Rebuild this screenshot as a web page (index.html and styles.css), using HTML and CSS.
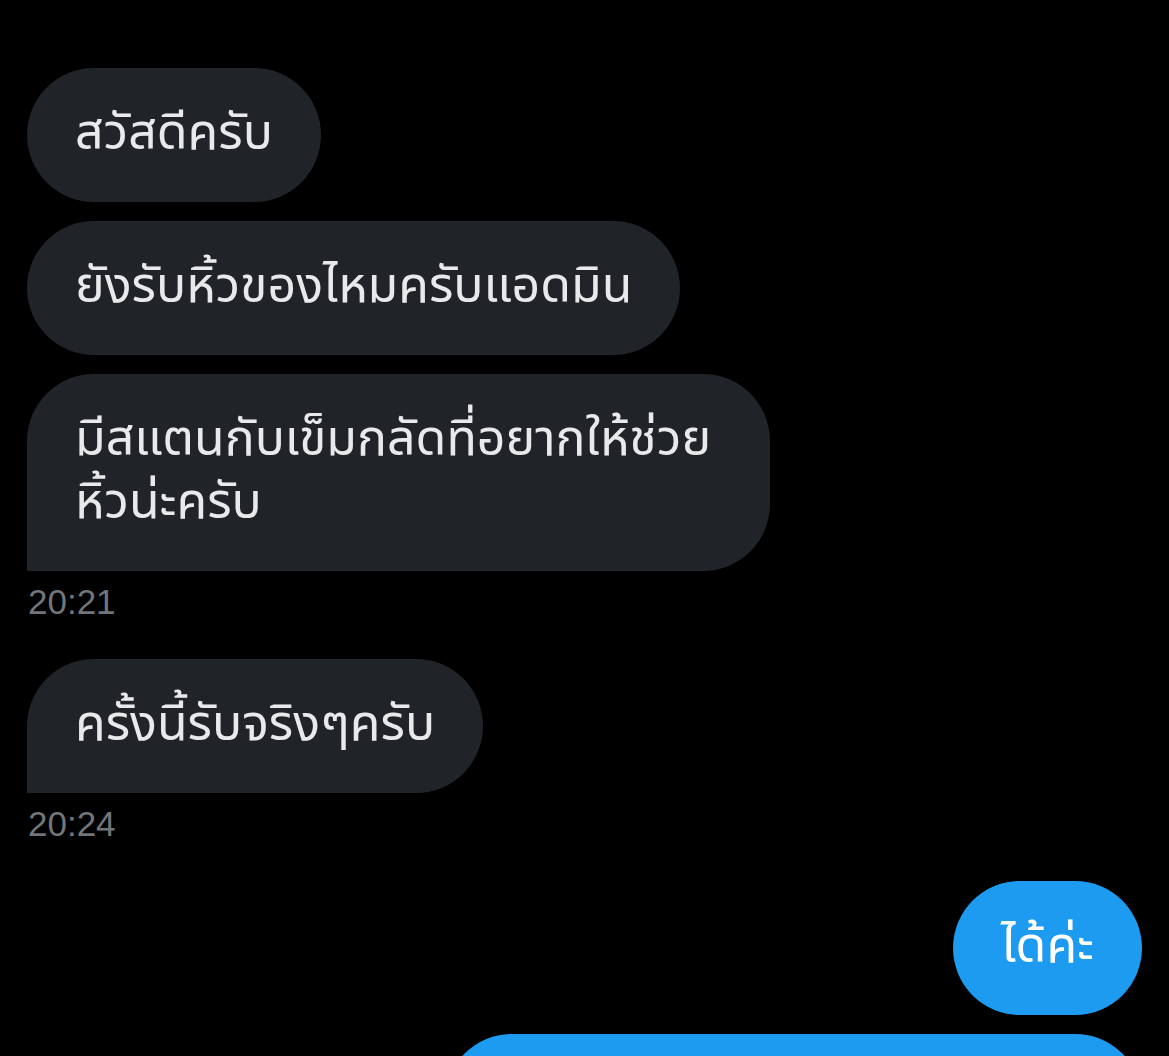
FILE: index.html
```html
<!DOCTYPE html>
<html>
<head>
  <meta charset="UTF-8">
  <link rel="stylesheet" href="styles.css">
</head>
<body>
  <div class="conversation">

    <!-- incoming group -->
    <div class="msg-group incoming">
      <div class="bubble first">สวัสดีครับ</div>
      <div class="bubble">ยังรับหิ้วของไหมครับแอดมิน</div>
      <div class="bubble last">มีสแตนกับเข็มกลัดที่อยากให้ช่วยหิ้วน่ะครับ</div>
      <div class="msg-time">20:21</div>
    </div>

    <div class="msg-group incoming">
      <div class="bubble single">ครั้งนี้รับจริงๆครับ</div>
      <div class="msg-time">20:24</div>
    </div>

    <!-- outgoing group -->
    <div class="msg-group outgoing">
      <div class="bubble first">ได้ค่ะ</div>
      <div class="bubble last">ส่งรูปสินค้ามาให้ดูก่อนได้เลยค่ะ</div>
    </div>

  </div>
</body>
</html>
```

FILE: styles.css
```css
body {
  margin: 0;
  background: #000;
  font-family: "Noto Sans Thai", "Noto Sans", "Liberation Sans", sans-serif;
}

.conversation {
  display: flex;
  flex-direction: column;
  gap: 37px;
  padding: 68px 27px 0;
}

.msg-group {
  display: flex;
  flex-direction: column;
  gap: 19px;
}

.incoming {
  align-items: flex-start;
}

.outgoing {
  align-items: flex-end;
}

.bubble {
  max-width: 647px;
  padding: 35px 48px 36px;
  border-radius: 67px;
  font-size: 50px;
  line-height: 63px;
  color: #e7e9ea;
  background: #202327;
}

.outgoing .bubble {
  color: #fff;
  background: #1d9bf0;
}

/* the corner pointing at the sender is squared off on the group's last bubble */
.incoming .last,
.incoming .single {
  border-bottom-left-radius: 0;
}

.outgoing .last {
  border-bottom-right-radius: 0;
}

.msg-time {
  margin-top: -8px;
  padding-left: 1px;
  font-family: "Liberation Sans", sans-serif;
  font-size: 35px;
  line-height: 40px;
  color: #71767b;
}
```
